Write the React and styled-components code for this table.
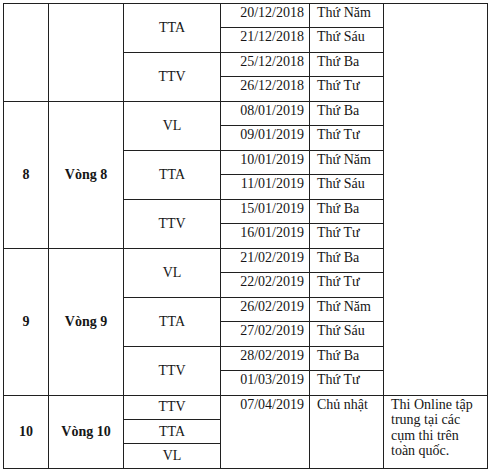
import React from 'react'
import styled, { createGlobalStyle } from 'styled-components'

const GlobalStyle = createGlobalStyle`
  html, body {
    margin: 0;
    padding: 0;
    background: #fff;
  }
`

const Page = styled.div`
  padding: 3px 0 0 3px;
`

const Table = styled.table`
  border-collapse: collapse;
  table-layout: fixed;
  width: 484px;
  font-family: "Liberation Serif", "Times New Roman", serif;
  font-size: 14px;
  color: #161616;
`

const Row = styled.tr`
  height: 24.47px;
`

const Cell = styled.td`
  border: 1px solid #202020;
  padding: ${p => (p.$top ? '1px 5px 0 7px' : '0 5px')};
  text-align: ${p => p.$align || 'center'};
  vertical-align: ${p => (p.$top ? 'top' : 'middle')};
  font-weight: ${p => (p.$bold ? 700 : 400)};
  white-space: nowrap;
  overflow: hidden;
`

const DateCell = styled(Cell)`
  padding: 1px 5px 0 5px;
  text-align: right;
  vertical-align: top;
`

const Note = styled(Cell)`
  line-height: 15.6px;
  white-space: normal;
`

const widths = [45, 75, 97, 89, 74, 104]

const groups = [
  {
    num: '',
    label: '',
    subjects: [
      { name: 'TTA', days: [['20/12/2018', 'Thứ Năm'], ['21/12/2018', 'Thứ Sáu']] },
      { name: 'TTV', days: [['25/12/2018', 'Thứ Ba'], ['26/12/2018', 'Thứ Tư']] },
    ],
  },
  {
    num: '8',
    label: 'Vòng 8',
    subjects: [
      { name: 'VL', days: [['08/01/2019', 'Thứ Ba'], ['09/01/2019', 'Thứ Tư']] },
      { name: 'TTA', days: [['10/01/2019', 'Thứ Năm'], ['11/01/2019', 'Thứ Sáu']] },
      { name: 'TTV', days: [['15/01/2019', 'Thứ Ba'], ['16/01/2019', 'Thứ Tư']] },
    ],
  },
  {
    num: '9',
    label: 'Vòng 9',
    subjects: [
      { name: 'VL', days: [['21/02/2019', 'Thứ Ba'], ['22/02/2019', 'Thứ Tư']] },
      { name: 'TTA', days: [['26/02/2019', 'Thứ Năm'], ['27/02/2019', 'Thứ Sáu']] },
      { name: 'TTV', days: [['28/02/2019', 'Thứ Ba'], ['01/03/2019', 'Thứ Tư']] },
    ],
  },
]

const leadRows = groups.reduce((n, g) => n + g.subjects.length * 2, 0)

const App = () => {
  const rows = []
  groups.forEach((g, gi) => {
    const span = g.subjects.length * 2
    g.subjects.forEach((s, si) => {
      s.days.forEach(([date, day], di) => {
        const first = si === 0 && di === 0
        rows.push(
          <Row key={`${gi}-${si}-${di}`}>
            {first && <Cell rowSpan={span} $bold>{g.num}</Cell>}
            {first && <Cell rowSpan={span} $bold>{g.label}</Cell>}
            {di === 0 && <Cell rowSpan={2}>{s.name}</Cell>}
            <DateCell>{date}</DateCell>
            <Cell $align="left" $top>{day}</Cell>
            {gi === 0 && first && <Cell rowSpan={leadRows} />}
          </Row>
        )
      })
    })
  })

  return (
    <Page>
      <GlobalStyle />
      <Table>
        <colgroup>
          {widths.map((w, i) => <col key={i} style={{ width: w }} />)}
        </colgroup>
        <tbody>
          {rows}
          <Row>
            <Cell rowSpan={3} $bold>10</Cell>
            <Cell rowSpan={3} $bold>Vòng 10</Cell>
            <Cell>TTV</Cell>
            <DateCell rowSpan={3}>07/04/2019</DateCell>
            <Cell rowSpan={3} $align="left" $top>Chủ nhật</Cell>
            <Note rowSpan={3} $align="left" $top>
              Thi Online tập<br />trung tại các<br />cụm thi trên<br />toàn quốc.
            </Note>
          </Row>
          <Row>
            <Cell>TTA</Cell>
          </Row>
          <Row>
            <Cell>VL</Cell>
          </Row>
        </tbody>
      </Table>
    </Page>
  )
}

export default App
